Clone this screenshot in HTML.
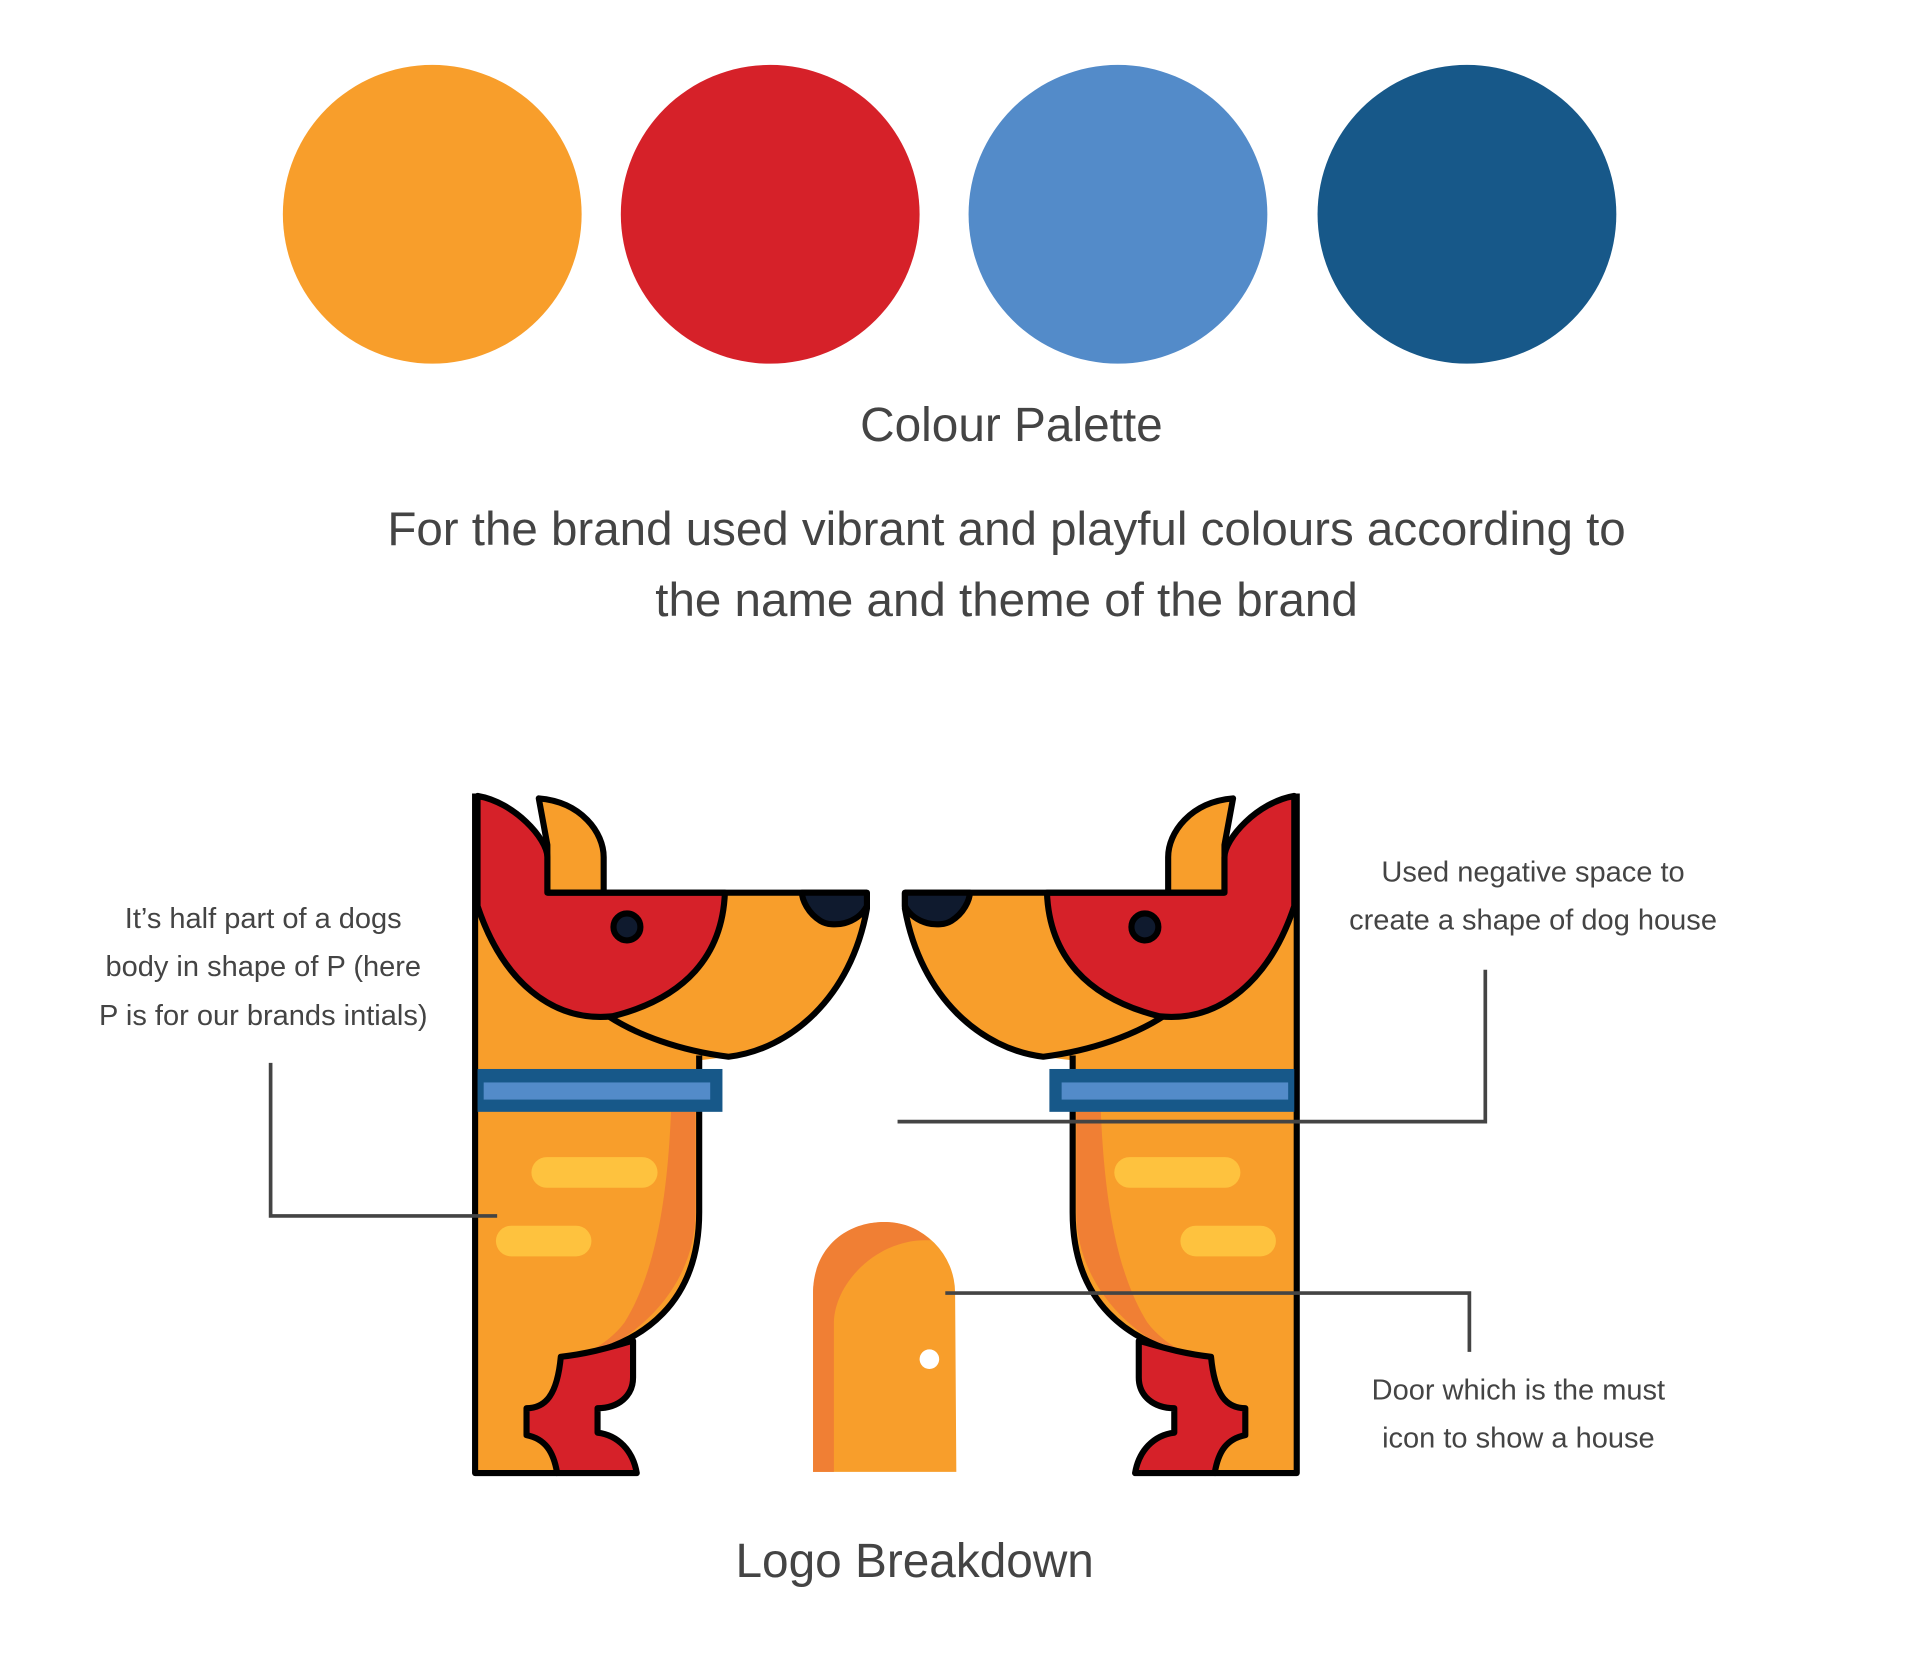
<!DOCTYPE html>
<html><head><meta charset="utf-8"><style>
html,body{margin:0;padding:0;background:#fff;}
svg{display:block;}
text{font-family:"Liberation Sans",Arial,sans-serif;fill:#444;}
</style></head><body>
<svg width="1920" height="1656" viewBox="0 0 1568 1352.4" xmlns="http://www.w3.org/2000/svg">
<rect width="1568" height="1352.4" fill="#fff"/>
<circle cx="353" cy="175" r="122" fill="#f89e2b"/>
<circle cx="629" cy="175" r="122" fill="#d62129"/>
<circle cx="913" cy="175" r="122" fill="#538bc9"/>
<circle cx="1198" cy="175" r="122" fill="#175889"/>
<text x="826" y="360" text-anchor="middle" font-size="39">Colour Palette</text>
<text x="822" y="445" text-anchor="middle" font-size="38.8">For the brand used vibrant and playful colours according to</text>
<text x="822" y="503" text-anchor="middle" font-size="38.8">the name and theme of the brand</text>

<g id="dog" stroke-linejoin="round">
<path d="M390,729 L708,729 L706,745 C690,815 645,857 595,863 L571,866 L571,990 C571,1060 520,1105 458,1110 L455,1203 L390,1203 Z" fill="#f89e2b"/>
<path d="M548,908 C545,980 535,1040 510,1080 C495,1100 470,1110 458,1112 L458,1115 C520,1100 568,1050 568,990 L568,908 Z" fill="#f07f34"/>
<rect x="434" y="945" width="103" height="25" rx="12.5" fill="#fec23e"/>
<rect x="405" y="1001" width="78" height="25" rx="12.5" fill="#fec23e"/>
<g stroke="#000" stroke-width="5" fill="none">
<path d="M708,729 L708,742 C695,815 645,857 595,863 C555,858 520,845 497,830"/>
<path d="M571,862 L571,990 C571,1060 530,1100 458,1110"/>
<path d="M388,648 L388,1203 L455,1203"/>
</g>
<path d="M440,652 C475,655 493,680 493,700 L493,729 L447,729 L447,690 Z" fill="#f89e2b" stroke="#000" stroke-width="5"/>
<path d="M390,650 C420,655 447,685 447,700 L447,729 L592,729 C590,780 560,815 500,830 C450,835 410,800 390,740 Z" fill="#d62129" stroke="#000" stroke-width="5"/>
<path d="M447,729 L708,729" stroke="#000" stroke-width="5"/>
<path d="M655,729 L708,729 L708,740 C700,755 680,758 670,752 C660,746 655,735 655,729 Z" fill="#0f1a2e" stroke="#000" stroke-width="5"/>
<circle cx="512" cy="757" r="11" fill="#0f1a2e" stroke="#000" stroke-width="5"/>
<path d="M458,1108 C485,1105 505,1098 517,1095 L517,1125 C517,1140 505,1150 488,1150 L488,1170 C505,1172 517,1185 520,1203 L455,1203 C452,1185 445,1175 430,1172 L430,1150 C445,1150 455,1140 458,1108 Z" fill="#d62129" stroke="#000" stroke-width="5"/>
<rect x="390" y="873" width="200" height="35" fill="#175889"/>
<rect x="395" y="884" width="185" height="14" fill="#538bc9"/>
</g>
<use href="#dog" transform="translate(1447,0) scale(-1,1)"/>

<path d="M664,1202 L664,1056 A58,58 0 0 1 780,1056 L781,1202 Z" fill="#f89e2b"/>
<path d="M664,1202 L664,1056 C664,1020 690,998 722,998 C740,998 752,1005 760,1013 C720,1010 682,1045 681,1080 L681,1202 Z" fill="#f07f34"/>
<circle cx="759" cy="1110" r="8" fill="#fff"/>

<g stroke="#444" stroke-width="3" fill="none">
<path d="M221,868 L221,993 L406,993"/>
<path d="M733,916 L1213,916 L1213,792"/>
<path d="M772,1056 L1200,1056 L1200,1104"/>
</g>
<g font-size="23.7" text-anchor="middle">
<text x="215" y="758">It’s half part of a dogs</text>
<text x="215" y="797">body in shape of P (here</text>
<text x="215" y="837">P is for our brands intials)</text>
<text x="1252" y="720">Used negative space to</text>
<text x="1252" y="759">create a shape of dog house</text>
<text x="1240" y="1143">Door which is the must</text>
<text x="1240" y="1182">icon to show a house</text>
</g>
<text x="747" y="1288" text-anchor="middle" font-size="39">Logo Breakdown</text>
</svg>
</body></html>
